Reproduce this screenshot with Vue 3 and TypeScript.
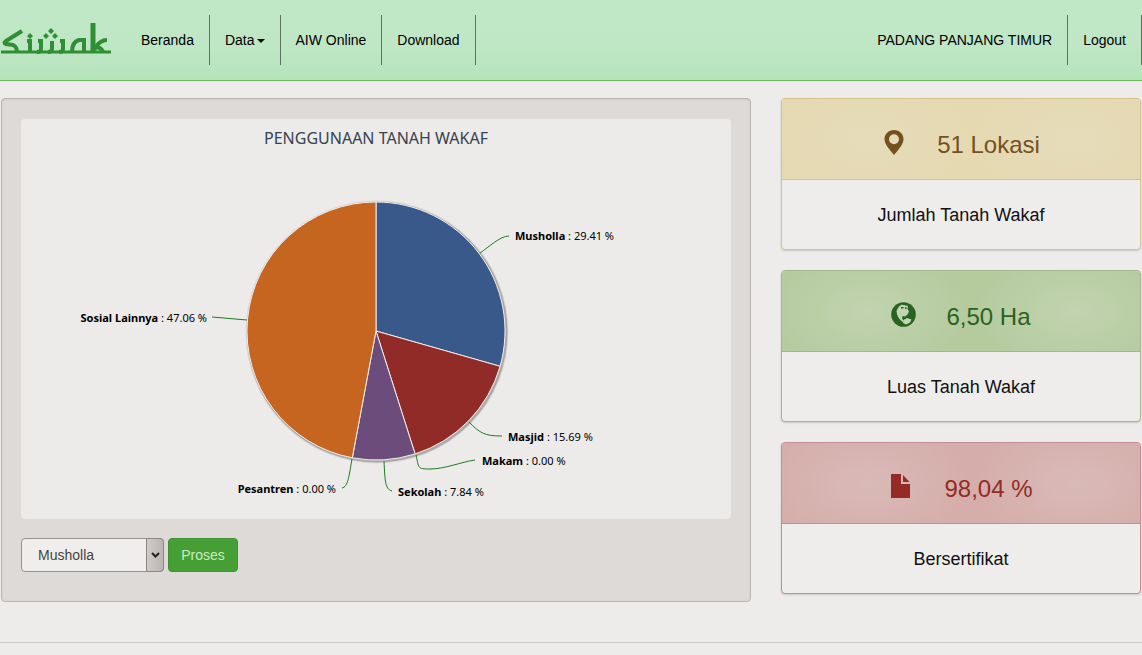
<script setup lang="ts">
import { computed, ref } from 'vue'

interface Slice {
  name: string
  value: number
  color: string
  x: number
  y: number
  anchor: 'start' | 'end'
  line: string
}

interface Stat {
  kind: string
  value: string
  label: string
}

const slices: Slice[] = [
  { name: 'Musholla', value: 29.41, color: '#385989', x: 494, y: 121, anchor: 'start', line: 'M459 134 C468 128 479 117 488 117' },
  { name: 'Masjid', value: 15.69, color: '#902b27', x: 487, y: 322, anchor: 'start', line: 'M448 303 C459 314 463 317 481 317' },
  { name: 'Makam', value: 0, color: '#7c9a42', x: 461, y: 346, anchor: 'start', line: 'M395 336 C398 349 396 350 409 350 C424 350 440 343 454 341' },
  { name: 'Sekolah', value: 7.84, color: '#6b4c7a', x: 377, y: 377, anchor: 'start', line: 'M363 342 C364 362 364 370 371 372' },
  { name: 'Pesantren', value: 0, color: '#3d96ae', x: 315, y: 374, anchor: 'end', line: 'M331 340 C328 357 327 368 321 369' },
  { name: 'Sosial Lainnya', value: 47.06, color: '#c5651f', x: 186, y: 203, anchor: 'end', line: 'M191 198 L226 201' },
]

const cx = 355
const cy = 212
const radius = 129

const wedges = computed(() => {
  const total = slices.reduce((sum, s) => sum + s.value, 0)
  const point = (share: number) => {
    const angle = (share / total) * Math.PI * 2 - Math.PI / 2
    return `${(cx + radius * Math.cos(angle)).toFixed(2)} ${(cy + radius * Math.sin(angle)).toFixed(2)}`
  }
  let start = 0
  return slices
    .filter((s) => s.value > 0)
    .map((s) => {
      const from = start
      start += s.value
      return {
        name: s.name,
        color: s.color,
        d: `M${cx} ${cy} L${point(from)} A${radius} ${radius} 0 0 1 ${point(start)} Z`,
      }
    })
})

const stats: Stat[] = [
  { kind: 'lokasi', value: '51 Lokasi', label: 'Jumlah Tanah Wakaf' },
  { kind: 'luas', value: '6,50 Ha', label: 'Luas Tanah Wakaf' },
  { kind: 'sertifikat', value: '98,04 %', label: 'Bersertifikat' },
]

const selected = ref('Musholla')
</script>

<template>
  <div class="page">
    <header class="topbar">
      <a class="brand" href="#" aria-label="Siwak">
        <svg width="112" height="36" viewBox="0 0 112 36" fill="none" stroke="#2f8f35" stroke-width="4">
          <path d="M1 30 H111" stroke-width="3" />
          <path d="M22 9 L6 19 Q3 21 6 22 L13 23 Q17 25 17 30" />
          <path d="M27 19 H30 V30 M38 19 H41 V27 Q41 30 37 30 M52 19 V27 Q52 30 48 30 M60 19 H63 V27 Q63 30 59 30" />
          <path d="M84 30 V18 H79 Q72 20 72 30" />
          <path d="M93 1 V30" stroke-width="5" />
          <path d="M107 18 Q100 18 95 26 Q101 24 103 30" />
          <path d="M30 11 l3 3 l-3 3 l-3 -3z M46 11 l3 3 l-3 3 l-3 -3z M55 11 l3 3 l-3 3 l-3 -3z M51 6 l3 3 l-3 3 l-3 -3z" fill="#2f8f35" stroke="none" />
        </svg>
      </a>
      <nav class="menu">
        <a href="#">Beranda</a>
        <a href="#">Data<span class="caret"></span></a>
        <a href="#">AIW Online</a>
        <a href="#">Download</a>
      </nav>
      <nav class="menu account">
        <a href="#">PADANG PANJANG TIMUR</a>
        <a href="#">Logout</a>
      </nav>
    </header>

    <main class="content">
      <section class="panel">
        <svg class="chart" viewBox="0 0 710 400" role="img" aria-label="Penggunaan Tanah Wakaf">
          <text class="title" x="355" y="25" text-anchor="middle">PENGGUNAAN TANAH WAKAF</text>
          <circle :cx="cx + 1" :cy="cy + 1" :r="radius + 1" class="shadow wide" />
          <circle :cx="cx + 1" :cy="cy + 1" :r="radius" class="shadow" />
          <path v-for="w in wedges" :key="w.name" :d="w.d" :fill="w.color" class="wedge" />
          <g v-for="s in slices" :key="s.name">
            <path :d="s.line" class="leader" />
            <text class="label" :x="s.x" :y="s.y" :text-anchor="s.anchor"><tspan class="name">{{ s.name }}</tspan> : {{ s.value.toFixed(2) }} %</text>
          </g>
        </svg>
        <form class="filter" @submit.prevent>
          <div class="picker">
            <select v-model="selected" aria-label="Penggunaan">
              <option v-for="s in slices" :key="s.name">{{ s.name }}</option>
            </select>
            <span class="arrow">
              <svg width="9" height="7" viewBox="0 0 9 7"><path d="M1 1 L4.500 4.500 L8 1" fill="none" stroke="#222" stroke-width="2" /></svg>
            </span>
          </div>
          <button type="submit">Proses</button>
        </form>
      </section>

      <aside class="stats">
        <article v-for="s in stats" :key="s.kind" class="card" :class="s.kind">
          <div class="head">
            <svg v-if="s.kind === 'lokasi'" width="25" height="25" viewBox="0 0 25 25">
              <path fill="currentColor" fill-rule="evenodd" d="M12 0 C6.500 0 2.500 4 2.500 9 C2.500 14 7 19 12 25 C17 19 21.500 14 21.500 9 C21.500 4 17.500 0 12 0 Z M12 4.200 A5 5 0 1 1 12 14.200 A5 5 0 1 1 12 4.200 Z" />
            </svg>
            <svg v-else-if="s.kind === 'luas'" width="25" height="25" viewBox="0 0 25 25">
              <circle cx="12.500" cy="12.500" r="12.300" fill="currentColor" />
              <path fill="#c3d6b2" d="M8 4.500 L10.500 2.800 L14 3.200 L17 4 L16.500 7 L18 9.500 L16.500 12.500 L14 14.500 L11.500 14 L11 16.500 L13 19 L11.500 20 L8 16.500 L6 12.500 L5.500 8.500 Z" />
              <path fill="#c3d6b2" d="M12.500 18 L16 16 L20.500 17.500 L19 20.500 L15 22.500 L12 21 Z" />
              <path fill="currentColor" d="M10 5 H13 L12 6.500 H10 Z M14 5.500 L15.500 5 V7 H14 Z" />
            </svg>
            <svg v-else width="25" height="25" viewBox="0 0 25 25">
              <path fill="currentColor" d="M2 0 H12 V10 H21 V24 H2 Z M14 1 L20.500 8 H14 Z" />
            </svg>
            <strong>{{ s.value }}</strong>
          </div>
          <p>{{ s.label }}</p>
        </article>
      </aside>
    </main>
    <hr />
  </div>
</template>

<style>
body {
  margin: 0;
  background: #edecea;
}
</style>

<style scoped>
.page {
  font: 14px/20px "Liberation Sans", Arial, sans-serif;
  color: #111;
}
.topbar {
  display: flex;
  align-items: center;
  height: 80px;
  border-bottom: 1px solid #6fb35c;
  background: linear-gradient(#c0e8c6 0%, #bfe7c5 55%, #b5e4bb 100%);
}
.brand {
  width: 112px;
  height: 36px;
  margin-right: 14px;
}
.brand svg {
  display: block;
}
.menu {
  display: flex;
}
.menu a {
  padding: 0 15px;
  border-right: 1px solid #61735f;
  line-height: 50px;
  color: #000;
  text-decoration: none;
  white-space: nowrap;
}
.account {
  margin-left: auto;
}
.caret {
  display: inline-block;
  margin-left: 2px;
  vertical-align: middle;
  border-top: 4px solid #000;
  border-left: 4px solid transparent;
  border-right: 4px solid transparent;
}
.content {
  display: grid;
  grid-template-columns: 25fr 12fr;
  align-items: start;
  gap: 30px;
  padding: 17px 1px 0;
}
.panel {
  padding: 20px 19px 29px;
  border: 1px solid #b9b5b2;
  border-radius: 4px;
  background: #dedad7;
  box-shadow: inset 0 1px 2px rgba(0, 0, 0, 0.08);
}
.chart {
  display: block;
  width: 100%;
  border-radius: 4px;
  background: #ecebe9;
  font-family: "Noto Sans", sans-serif;
}
.title {
  font-size: 16px;
  fill: #36424e;
}
.label {
  font-size: 11px;
  fill: #000;
}
.name {
  font-weight: 700;
}
.wedge {
  stroke: #f3eeea;
  stroke-width: 1;
  stroke-linejoin: round;
}
.shadow {
  fill: none;
  stroke: rgba(0, 0, 0, 0.22);
  stroke-width: 3;
}
.wide {
  stroke: rgba(0, 0, 0, 0.08);
}
.leader {
  fill: none;
  stroke: #1e7a1e;
  stroke-width: 1;
}
.filter {
  display: flex;
  gap: 4px;
  margin-top: 19px;
}
.picker {
  display: grid;
  grid-template-columns: 1fr 18px;
  width: 143px;
  height: 34px;
}
select {
  grid-area: 1 / 1 / 2 / 3;
  appearance: none;
  width: 100%;
  padding: 0 24px 0 16px;
  border: 1px solid #97928e;
  border-radius: 4px;
  background: #efeeec;
  color: #444;
  font: inherit;
}
.arrow {
  grid-area: 1 / 2 / 2 / 3;
  z-index: 1;
  display: flex;
  align-items: center;
  justify-content: center;
  border: 1px solid #8c8581;
  border-radius: 0 4px 4px 0;
  background: linear-gradient(90deg, #cfcac7, #bbb6b3);
  pointer-events: none;
}
button {
  width: 70px;
  height: 34px;
  padding: 0;
  border: 1px solid #3f9130;
  border-radius: 4px;
  background: #459f35;
  color: #cdeac2;
  font: inherit;
}
.stats {
  display: grid;
  gap: 20px;
}
.card {
  overflow: hidden;
  border: 1px solid var(--line);
  border-radius: 4px;
  background: #eeedeb;
  box-shadow: 0 1px 2px rgba(0, 0, 0, 0.15);
}
.head {
  display: flex;
  align-items: center;
  justify-content: center;
  gap: 30px;
  height: 80px;
  border-bottom: 1px solid var(--line);
  background:
    radial-gradient(ellipse 100px 60px at 24% 50%, var(--light), transparent),
    radial-gradient(ellipse 100px 60px at 82% 50%, var(--light), transparent),
    var(--tint);
  color: var(--ink);
}
.head svg {
  margin-top: 6px;
}
.head strong {
  margin-top: 12px;
  font-weight: 400;
  font-size: 24px;
  line-height: 28px;
}
.card p {
  margin: 0;
  padding-top: 1px;
  font-size: 18px;
  line-height: 68px;
  text-align: center;
}
.lokasi {
  --line: #d3c48f;
  --tint: #e5d9b2;
  --light: #e6dcba;
  --ink: #75511f;
}
.luas {
  --line: #a3b88c;
  --tint: #b5cb9e;
  --light: #c1d3b0;
  --ink: #2a6220;
}
.sertifikat {
  --line: #c48f8f;
  --tint: #d5aeab;
  --light: #d9bab7;
  --ink: #942b26;
}
hr {
  margin: 40px 0 12px;
  border: 0;
  border-top: 1px solid #cbc9c7;
}
</style>
